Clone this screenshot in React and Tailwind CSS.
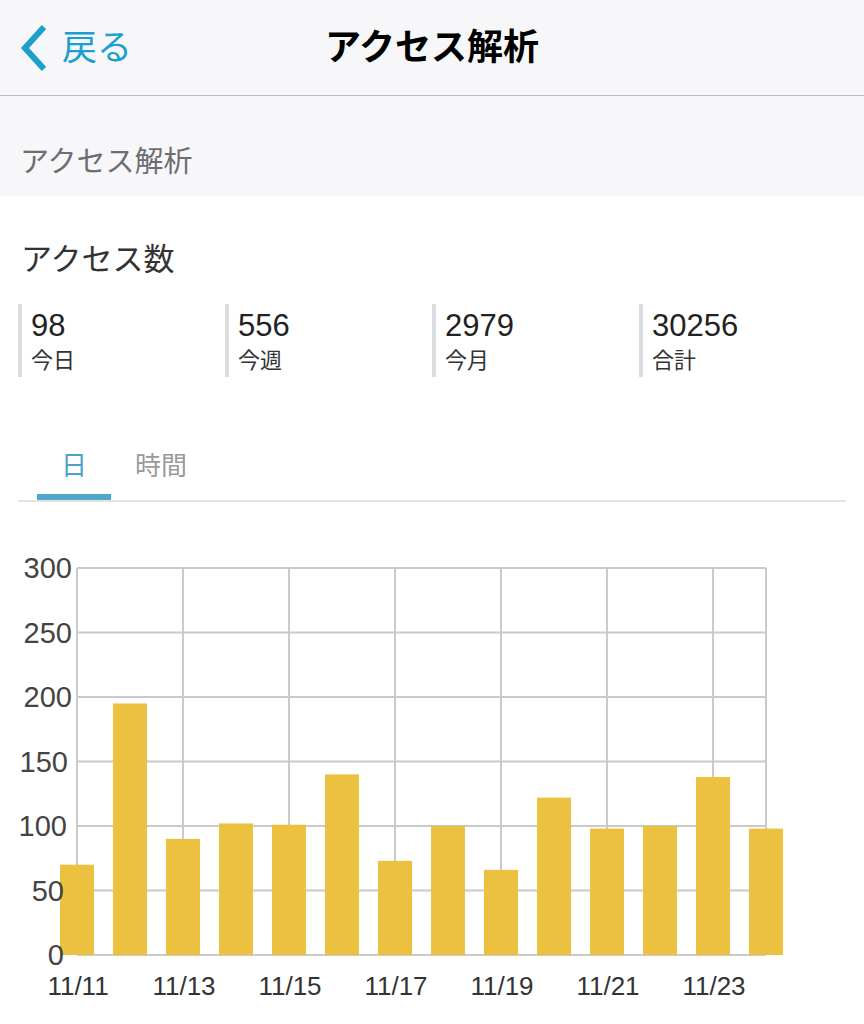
import React from 'react';

const FONT = { fontFamily: '"Liberation Sans", "Noto Sans CJK JP", sans-serif' };

const stats = [
  { value: '98', label: '今日' },
  { value: '556', label: '今週' },
  { value: '2979', label: '今月' },
  { value: '30256', label: '合計' },
];

const daily = [70, 195, 90, 102, 101, 140, 73, 100, 66, 122, 98, 100, 138, 98];

// plot area in page coordinates
const LEFT = 77;
const RIGHT = 766;
const TOP = 569;
const BOTTOM = 956;
const DAY = 53;

const yTicks = [
  { v: 300, x: 72 },
  { v: 250, x: 72 },
  { v: 200, x: 72 },
  { v: 150, x: 68 },
  { v: 100, x: 67 },
  { v: 50, x: 64 },
  { v: 0, x: 64 },
];

const yOf = (v) => BOTTOM - (v / 300) * (BOTTOM - TOP);

const BarChart = () => (
  <svg viewBox="0 503 864 521" className="block h-[521px] w-[864px]">
    {/* horizontal grid */}
    {yTicks.map((t) => (
      <line key={t.v} x1={LEFT} x2={RIGHT} y1={yOf(t.v)} y2={yOf(t.v)} stroke="#cacaca" strokeWidth="2" />
    ))}
    {/* vertical grid */}
    {[0, 2, 4, 6, 8, 10, 12].map((i) => (
      <line key={i} x1={LEFT + i * DAY} x2={LEFT + i * DAY} y1={TOP} y2={BOTTOM} stroke="#cacaca" strokeWidth="2" />
    ))}
    <line x1={RIGHT} x2={RIGHT} y1={TOP} y2={BOTTOM} stroke="#cacaca" strokeWidth="2" />

    {daily.map((v, i) => (
      <rect key={i} x={LEFT + i * DAY - 17} y={yOf(v)} width="34" height={BOTTOM - yOf(v)} fill="#ecc140" />
    ))}

    {yTicks.map((t) => (
      <text key={t.v} x={t.x} y={yOf(t.v) + 10} textAnchor="end" fontSize="29" fill="#444" style={FONT}>
        {t.v}
      </text>
    ))}
    {[11, 13, 15, 17, 19, 21, 23].map((d, k) => (
      <text key={d} x={LEFT + 1 + k * 2 * DAY} y={996} textAnchor="middle" fontSize="26" fill="#333" style={FONT}>
        11/{d}
      </text>
    ))}
  </svg>
);

export default function App() {
  return (
    <div className="w-[864px] h-[1024px] overflow-hidden bg-white" style={FONT}>
      {/* nav bar */}
      <div className="grid h-[96px] grid-cols-[1fr_auto_1fr] items-center border-b border-[#bdbdbd] bg-[#f7f7f9]">
        <div className="flex items-center pl-[20px]">
          <svg width="28" height="48" viewBox="0 0 28 48" className="mr-[14px]">
            <polyline points="24,3 5,24 24,45" fill="none" stroke="#1b9fcf" strokeWidth="6" strokeLinejoin="miter" />
          </svg>
          <span className="text-[35px] leading-[44px] text-[#1b9fcf]">戻る</span>
        </div>
        <h1 className="text-[36px] font-bold leading-[44px] text-black">アクセス解析</h1>
        <div />
      </div>

      {/* section header */}
      <div className="h-[100px] bg-[#f7f7f9] pl-[20px] pt-[46px]">
        <p className="text-[29px] leading-[40px] text-[#6d6d72]">アクセス解析</p>
      </div>

      <div className="px-[18px]">
        <h2 className="mt-[44px] pl-[3px] text-[31px] leading-[40px] text-[#333]">アクセス数</h2>

        <div className="mt-[24px] grid grid-cols-4">
          {stats.map((s) => (
            <div key={s.label} className="h-[73px] border-l-4 border-[#dcdcdc] pl-[9px] pt-[4px]">
              <div className="text-[31px] leading-[36px] text-[#222]">{s.value}</div>
              <div className="mt-[3px] text-[22px] leading-[28px] text-[#333]">{s.label}</div>
            </div>
          ))}
        </div>

        <div className="mt-[58px] flex border-b-2 border-[#e2e2e2] pl-[19px]">
          <button type="button" className="h-[65px] self-start border-b-[6px] border-[#4fa8cc] px-[24px] pt-[2px] text-[26px] leading-[34px] text-[#4aa3c8]">
            日
          </button>
          <button type="button" className="h-[65px] self-start border-b-[6px] border-transparent px-[24px] pt-[2px] text-[26px] leading-[34px] text-[#9a9a9a]">
            時間
          </button>
        </div>
      </div>

      <BarChart />
    </div>
  );
}
